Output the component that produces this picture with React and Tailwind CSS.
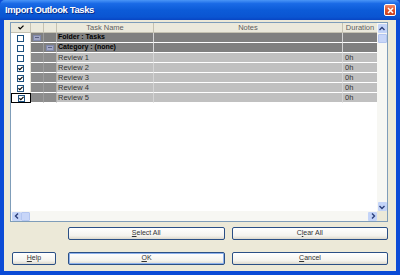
import React from 'react';

const rows = [
  { type: 'folder', label: 'Folder : Tasks', checked: false },
  { type: 'category', label: 'Category : (none)', checked: false },
  { type: 'task', label: 'Review 1', checked: false, dur: '0h' },
  { type: 'task', label: 'Review 2', checked: true, dur: '0h' },
  { type: 'task', label: 'Review 3', checked: true, dur: '0h' },
  { type: 'task', label: 'Review 4', checked: true, dur: '0h' },
  { type: 'task', label: 'Review 5', checked: true, dur: '0h', selected: true },
];

const Check = ({ className = '' }) => (
  <svg width="6" height="5" viewBox="0 0 6 5" className={className}>
    <path d="M0.5 2.2 L2.2 3.9 L5.5 0.6" fill="none" stroke="#000" strokeWidth="1.3" />
  </svg>
);

const Box = ({ checked }) => (
  <div className="w-[7px] h-[7px] border border-[#1c5180] bg-white flex items-center justify-center">
    {checked && <Check />}
  </div>
);

const Minus = () => (
  <div className="w-[8px] h-[6px] bg-[#a3a8c4] border border-[#8088aa] flex items-center justify-center">
    <div className="w-[4px] h-px bg-[#5a6080]" />
  </div>
);

const Arrow = ({ dir }) => {
  const d = {
    up: 'M1.5 5 L4 2.5 L6.5 5',
    down: 'M1.5 3 L4 5.5 L6.5 3',
    left: 'M5 1.5 L2.5 4 L5 6.5',
    right: 'M3 1.5 L5.5 4 L3 6.5',
  }[dir];
  return (
    <div className="w-[9px] h-[9px] bg-[#c4d4f8] rounded-[1px] flex items-center justify-center">
      <svg width="8" height="8" viewBox="0 0 8 8">
        <path d={d} fill="none" stroke="#2b3f7a" strokeWidth="1.4" />
      </svg>
    </div>
  );
};

const Btn = ({ children, className = '', def = false }) => (
  <div
    className={`h-[13px] rounded-[2px] border border-[#2a4f85] bg-[linear-gradient(180deg,#ffffff_0%,#f4f3ee_70%,#dcd8cc_100%)] flex items-center justify-center text-[7px] text-[#333] ${def ? 'shadow-[inset_0_0_0_1px_#8fb2ec]' : ''} ${className}`}
  >
    {children}
  </div>
);

export default function App() {
  return (
    <div
      className="w-[400px] h-[275px] bg-[#0b4bd6] flex flex-col overflow-hidden"
      style={{ fontFamily: '"Liberation Sans", Arial, sans-serif' }}
    >
      {/* Title bar */}
      <div className="h-[20px] shrink-0 flex items-center justify-between pl-[5px] pr-[4px] bg-[linear-gradient(180deg,#4a95f7_0%,#1a6ae6_18%,#0c5bd8_50%,#0a55d2_85%,#0845c4_100%)] rounded-t-[5px]">
        <span className="text-white font-bold text-[9.5px] tracking-[-0.4px] [text-shadow:1px_1px_0_#0a2f8a]">
          Import Outlook Tasks
        </span>
        <div className="w-[12px] h-[12px] rounded-[2px] border border-white bg-[linear-gradient(180deg,#f08a6a_0%,#e0532c_50%,#c8401c_100%)] flex items-center justify-center">
          <svg width="7" height="7" viewBox="0 0 7 7">
            <path d="M1 1 L6 6 M6 1 L1 6" stroke="#fff" strokeWidth="1.5" />
          </svg>
        </div>
      </div>

      {/* Client area */}
      <div className="flex-1 mx-[4px] mb-[4px] bg-[#ece9d8] pt-[2px] pl-[6px] pr-[8px] flex flex-col">
        {/* Grid */}
        <div className="h-[200px] border border-[#7f9db9] bg-white flex flex-col">
          <div className="flex flex-1 min-h-0">
            <div className="flex-1 flex flex-col">
              {/* Header */}
              <div className="h-[10px] flex bg-[#ebe9dc] border-b border-[#c5c2b2] text-[7.5px] text-[#5e5e5e]">
                <div className="w-[20px] border-r border-[#c5c2b2] flex items-center justify-center">
                  <Check />
                </div>
                <div className="w-[13px] border-r border-[#c5c2b2]" />
                <div className="w-[13px] border-r border-[#c5c2b2]" />
                <div className="w-[97px] border-r border-[#c5c2b2] flex items-center justify-center">Task Name</div>
                <div className="w-[189px] border-r border-[#c5c2b2] flex items-center justify-center">Notes</div>
                <div className="w-[34px] flex items-center justify-center">Duration</div>
              </div>
              {/* Rows */}
              {rows.map((r, i) => {
                const dark = r.type !== 'task';
                const main = dark ? 'bg-[#808080]' : 'bg-[#c0c0c0]';
                const side = dark ? 'bg-[#808080]' : 'bg-[#8c8c8c]';
                return (
                  <div key={i} className="h-[10px] flex">
                    <div
                      className={`w-[20px] flex items-center justify-center bg-white ${
                        r.selected ? 'border border-black' : 'border-r border-[#e4e1d6]'
                      }`}
                    >
                      <Box checked={r.checked} />
                    </div>
                    <div className={`w-[13px] ${side} border-b border-white border-r border-r-[#9c9c9c] flex items-center justify-center`}>
                      {r.type === 'folder' && <Minus />}
                    </div>
                    <div className={`w-[13px] ${side} border-b border-white border-r border-r-[#b0b0b0] flex items-center justify-center`}>
                      {r.type === 'category' && <Minus />}
                    </div>
                    <div
                      className={`w-[97px] ${main} border-b border-white border-r border-r-[#d4d4d4] flex items-center pl-[1px] whitespace-nowrap ${
                        dark ? 'font-bold text-black text-[7px]' : 'text-[#333] text-[7.5px]'
                      }`}
                    >
                      {r.label}
                    </div>
                    <div className={`w-[189px] ${main} border-b border-white border-r border-r-[#d4d4d4]`} />
                    <div className={`w-[34px] ${main} border-b border-white flex items-center pl-[2px] text-[7.5px] text-[#333]`}>
                      {r.dur}
                    </div>
                  </div>
                );
              })}
            </div>
            {/* Vertical scrollbar */}
            <div className="w-[10px] bg-[#f7f7f3] flex flex-col items-center justify-between pt-[1px]">
              <div className="flex flex-col gap-[1px]">
                <Arrow dir="up" />
                <div className="w-[9px] h-[9px] bg-[#c8d6f8] border border-[#b4c6f0] rounded-[1px]" />
              </div>
              <Arrow dir="down" />
            </div>
          </div>
          {/* Horizontal scrollbar */}
          <div className="h-[10px] flex bg-[#f7f7f3]">
            <div className="flex-1 flex items-center justify-between pl-[1px]">
              <div className="flex">
                <Arrow dir="left" />
                <div className="w-[9px] h-[9px] bg-[#c8d6f8] border border-[#b4c6f0] rounded-[1px]" />
              </div>
              <Arrow dir="right" />
            </div>
            <div className="w-[10px] bg-[#ece9d8]" />
          </div>
        </div>

        {/* Select / Clear */}
        <div className="flex gap-[7px] pl-[58px] mt-[5px]">
          <Btn className="flex-1">
            <span><span className="underline">S</span>elect All</span>
          </Btn>
          <Btn className="flex-1">
            <span>C<span className="underline">l</span>ear All</span>
          </Btn>
        </div>

        {/* Help / OK / Cancel */}
        <div className="flex mt-[12px] pl-[2px]">
          <Btn className="w-[44px]">
            <span><span className="underline">H</span>elp</span>
          </Btn>
          <Btn className="w-[157px] ml-[12px]" def>
            <span><span className="underline">O</span>K</span>
          </Btn>
          <Btn className="flex-1 ml-[7px]">
            <span><span className="underline">C</span>ancel</span>
          </Btn>
        </div>
      </div>
    </div>
  );
}
